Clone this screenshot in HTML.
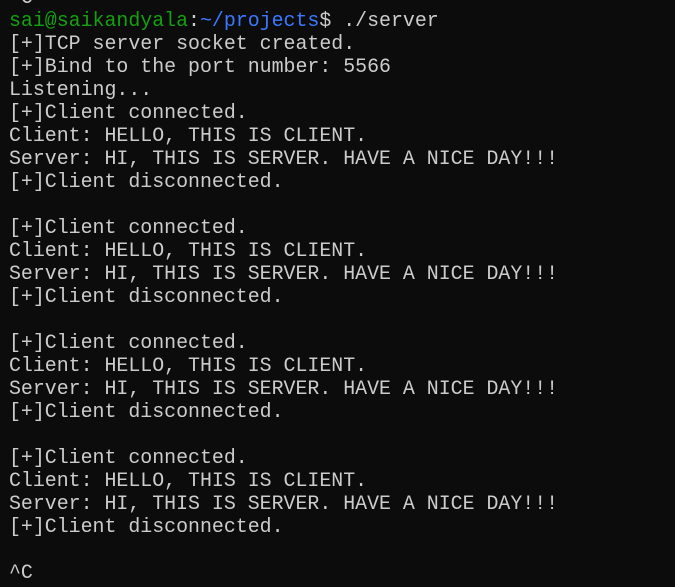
<!DOCTYPE html>
<html><head><meta charset="utf-8"><style>
html,body{margin:0;padding:0;background:#0c0c0c;width:675px;height:587px;overflow:hidden}
pre{position:absolute;left:9px;top:-14px;margin:0;font-family:"Liberation Mono",monospace;font-size:19.9px;line-height:23px;color:#cccccc;white-space:pre}
.g{color:#13a10e}
.b{color:#3b78ff}
</style></head><body><pre>^C
<span class="g">sai@saikandyala</span>:<span class="b">~/projects</span>$ ./server
[+]TCP server socket created.
[+]Bind to the port number: 5566
Listening...
[+]Client connected.
Client: HELLO, THIS IS CLIENT.
Server: HI, THIS IS SERVER. HAVE A NICE DAY!!!
[+]Client disconnected.

[+]Client connected.
Client: HELLO, THIS IS CLIENT.
Server: HI, THIS IS SERVER. HAVE A NICE DAY!!!
[+]Client disconnected.

[+]Client connected.
Client: HELLO, THIS IS CLIENT.
Server: HI, THIS IS SERVER. HAVE A NICE DAY!!!
[+]Client disconnected.

[+]Client connected.
Client: HELLO, THIS IS CLIENT.
Server: HI, THIS IS SERVER. HAVE A NICE DAY!!!
[+]Client disconnected.

^C
</pre></body></html>
